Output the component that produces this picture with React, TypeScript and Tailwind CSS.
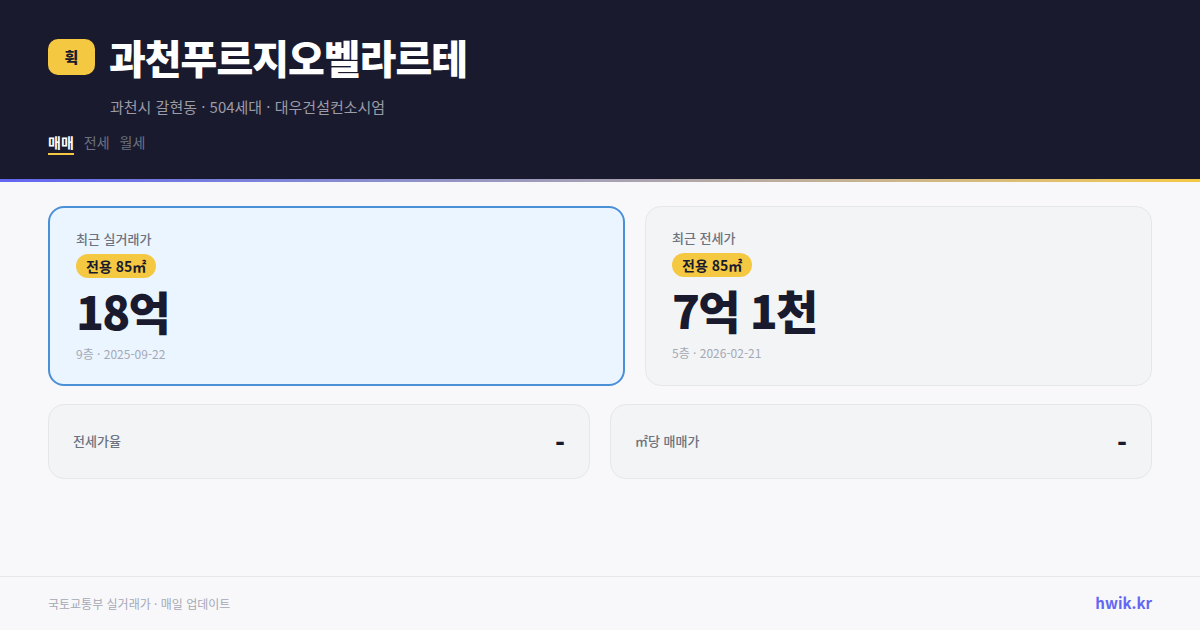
const FONT = "font-['Noto_Sans_CJK_KR',sans-serif]";

function PriceCard({ label, price, meta, highlight }: { label: string; price: string; meta: string; highlight?: boolean }) {
  return (
    <div
      className={
        highlight
          ? "w-[577px] h-[180px] shrink-0 rounded-2xl border-2 border-[#4a90d9] bg-[#ebf5ff] px-[26px] pt-[21px]"
          : "flex-1 h-[180px] rounded-2xl border border-[#e5e7eb] bg-[#f3f4f6] px-[26px] pt-[21px]"
      }
    >
      <div className="text-[13px] leading-[19px] font-medium text-[#6b7280]">{label}</div>
      <div className="mt-[6px] flex">
        <span className="h-6 rounded-full bg-[#f5c842] px-[10px] text-[14px] leading-6 font-bold text-[#1a1a2e]">전용 85㎡</span>
      </div>
      <div className="mt-[2px] text-[46px] leading-[60px] font-black tracking-[-1.8px] text-[#1a1a2e]">{price}</div>
      <div className="mt-[5px] text-[12px] leading-[18px] text-[#a5a8b5]">{meta}</div>
    </div>
  );
}

function StatCard({ label }: { label: string }) {
  return (
    <div className="flex h-[75px] flex-1 items-center justify-between rounded-2xl border border-[#e5e7eb] bg-[#f3f4f6] px-6 pb-[1px]">
      <span className="text-[13px] font-medium text-[#6b7280]">{label}</span>
      <span className="text-[26px] font-extrabold text-[#1a1a2e]">-</span>
    </div>
  );
}

export default function App() {
  return (
    <div lang="ko" className={`${FONT} flex h-[630px] w-[1200px] flex-col overflow-hidden bg-[#f8f8fb]`}>
      <header className="h-[179px] bg-[#1a1a2e] px-12 pt-[31px]">
        <div className="flex items-center gap-[14px]">
          <div className="flex h-9 w-[47px] items-center justify-center rounded-[10px] bg-[#f5c842] text-[15px] font-extrabold text-[#1a1a2e]">휙</div>
          <h1 className="text-[40px] leading-[52px] font-black tracking-[-1px] text-white">과천푸르지오벨라르테</h1>
        </div>
        <div className="mt-[14px] ml-[62px] text-[15px] leading-5 text-[#9a9ca8]">과천시 갈현동 · 504세대 · 대우건설컨소시엄</div>
        <div className="mt-[15px] flex gap-[10px] text-[14px] leading-5">
          <span className="border-b-2 border-[#f5c842] pb-[1px] font-bold text-white">매매</span>
          <span className="text-[#6b7280]">전세</span>
          <span className="text-[#6b7280]">월세</span>
        </div>
      </header>
      <div className="h-[3px] bg-gradient-to-r from-[#6366f1] to-[#f5c842]" />

      <main className="flex flex-1 flex-col gap-[18px] px-12 pt-6">
        <div className="flex gap-5">
          <PriceCard highlight label="최근 실거래가" price="18억" meta="9층 · 2025-09-22" />
          <PriceCard label="최근 전세가" price="7억 1천" meta="5층 · 2026-02-21" />
        </div>
        <div className="flex gap-5">
          <StatCard label="전세가율" />
          <StatCard label="㎡당 매매가" />
        </div>
      </main>

      <footer className="flex h-[54px] items-center justify-between border-t border-[#e5e7eb] px-12">
        <span className="text-[12px] text-[#a5a8b5]">국토교통부 실거래가 · 매일 업데이트</span>
        <span className="text-[15px] font-bold text-[#6366f1]">hwik.kr</span>
      </footer>
    </div>
  );
}
